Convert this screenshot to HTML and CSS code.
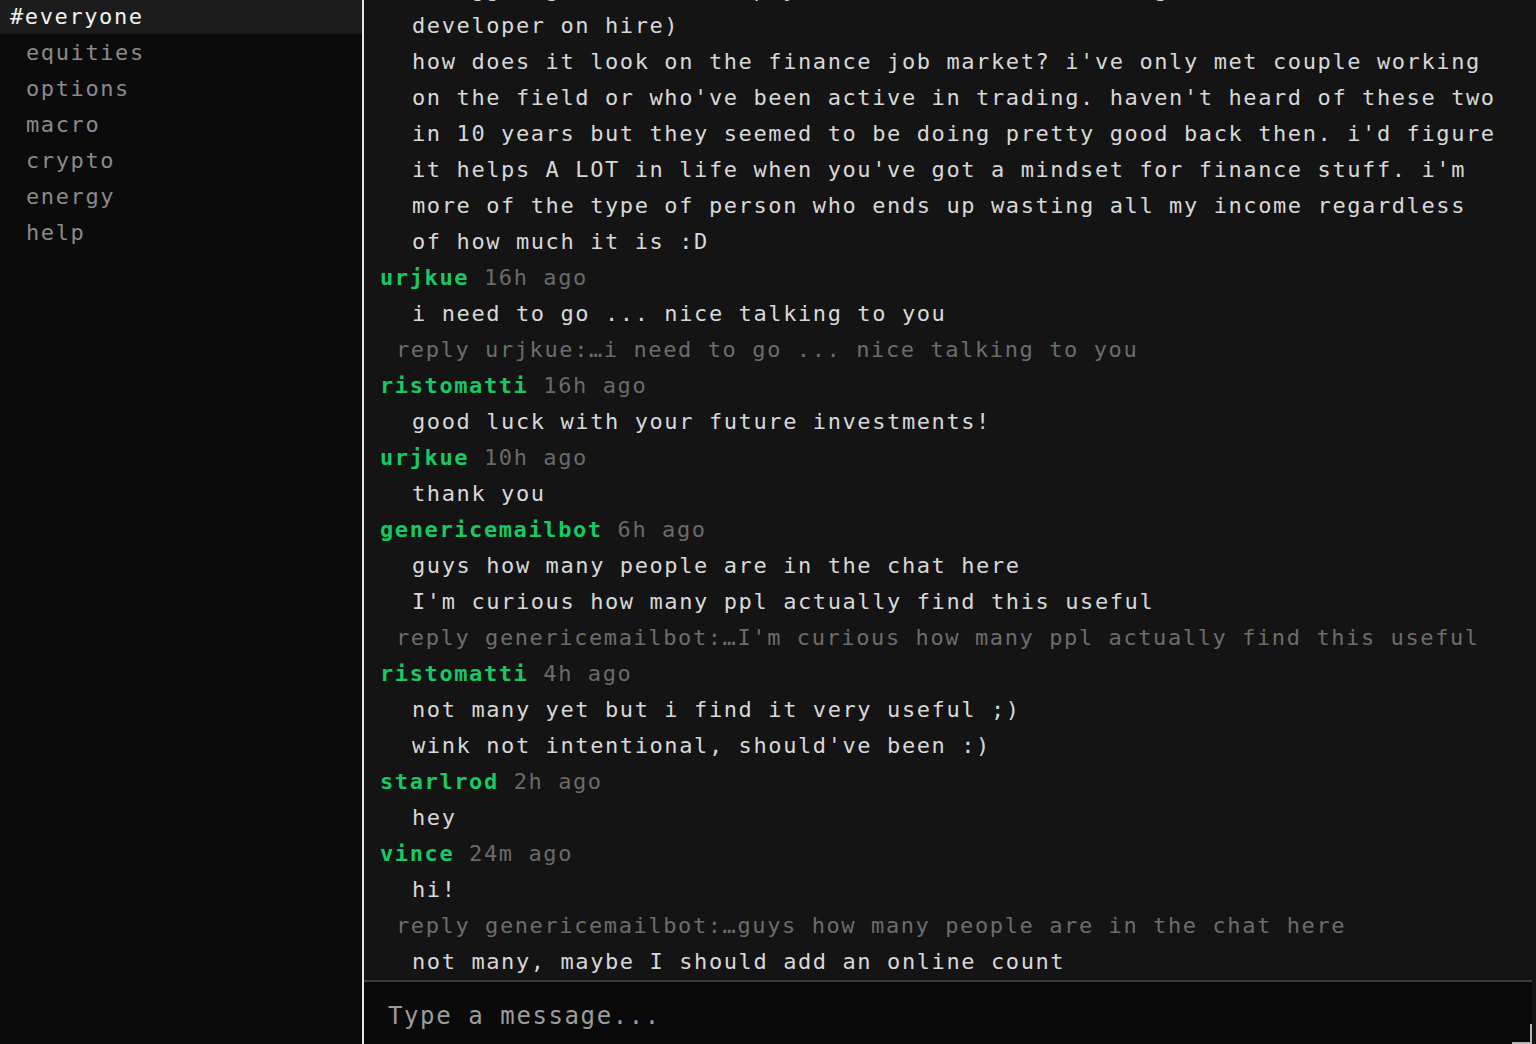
FILE: index.html
```html
<!DOCTYPE html>
<html lang="en">
<head>
<meta charset="utf-8">
<title>chat</title>
<link rel="stylesheet" href="styles.css">
</head>
<body>
<div class="app">
  <aside class="sidebar">
    <div class="channel active">#everyone</div>
    <div class="channel">equities</div>
    <div class="channel">options</div>
    <div class="channel">macro</div>
    <div class="channel">crypto</div>
    <div class="channel">energy</div>
    <div class="channel">help</div>
  </aside>
  <main class="main">
    <div class="messages">
      <div class="line text">struggling to make the pay work as a student or a good web freelance</div>
      <div class="line text">developer on hire)</div>
      <div class="line text">how does it look on the finance job market? i've only met couple working</div>
      <div class="line text">on the field or who've been active in trading. haven't heard of these two</div>
      <div class="line text">in 10 years but they seemed to be doing pretty good back then. i'd figure</div>
      <div class="line text">it helps A LOT in life when you've got a mindset for finance stuff. i'm</div>
      <div class="line text">more of the type of person who ends up wasting all my income regardless</div>
      <div class="line text">of how much it is :D</div>

      <div class="line head"><span class="user">urjkue</span> <span class="time">16h ago</span></div>
      <div class="line text">i need to go ... nice talking to you</div>
      <div class="line reply">reply urjkue:…i need to go ... nice talking to you</div>

      <div class="line head"><span class="user">ristomatti</span> <span class="time">16h ago</span></div>
      <div class="line text">good luck with your future investments!</div>

      <div class="line head"><span class="user">urjkue</span> <span class="time">10h ago</span></div>
      <div class="line text">thank you</div>

      <div class="line head"><span class="user">genericemailbot</span> <span class="time">6h ago</span></div>
      <div class="line text">guys how many people are in the chat here</div>
      <div class="line text">I'm curious how many ppl actually find this useful</div>
      <div class="line reply">reply genericemailbot:…I'm curious how many ppl actually find this useful</div>

      <div class="line head"><span class="user">ristomatti</span> <span class="time">4h ago</span></div>
      <div class="line text">not many yet but i find it very useful ;)</div>
      <div class="line text">wink not intentional, should've been :)</div>

      <div class="line head"><span class="user">starlrod</span> <span class="time">2h ago</span></div>
      <div class="line text">hey</div>

      <div class="line head"><span class="user">vince</span> <span class="time">24m ago</span></div>
      <div class="line text">hi!</div>
      <div class="line reply">reply genericemailbot:…guys how many people are in the chat here</div>
      <div class="line text">not many, maybe I should add an online count</div>
    </div>
    <div class="composer">
      <textarea class="input" placeholder="Type a message..."></textarea>
      <span class="grip"></span>
    </div>
  </main>
</div>
</body>
</html>
```

FILE: styles.css
```css
html, body {
  margin: 0;
  padding: 0;
  height: 100%;
  background: #141414;
  overflow: hidden;
}

body {
  font-family: "DejaVu Sans Mono", "Liberation Mono", monospace;
  font-size: 22px;
  letter-spacing: 1.6px;
}

.app {
  display: flex;
  height: 1044px;
}

.sidebar {
  width: 362px;
  flex: 0 0 362px;
  background: #0b0b0b;
  border-right: 2px solid #e4e4e4;
  display: flex;
  flex-direction: column;
}

.channel {
  height: 36px;
  line-height: 36px;
  padding-left: 26px;
  color: #8a8a8a;
  white-space: nowrap;
}

.channel.active {
  height: 34px;
  line-height: 34px;
  margin-bottom: 1px;
  padding-left: 10px;
  background: #1c1c1c;
  color: #f2f2f2;
}

.main {
  flex: 1;
  display: flex;
  flex-direction: column;
  min-width: 0;
  background: #141414;
}

.messages {
  flex: 1;
  min-height: 0;
  overflow: hidden;
  display: flex;
  flex-direction: column;
  justify-content: flex-end;
  padding-left: 16px;
}

.line {
  flex: 0 0 36px;
  height: 36px;
  line-height: 36px;
  white-space: pre;
}

.text {
  padding-left: 32px;
  color: #d8d8d8;
}

.reply {
  padding-left: 16px;
  color: #6c6c6c;
}

.user {
  color: #17c964;
  font-weight: bold;
}

.time {
  color: #6a6a6a;
}

.composer {
  position: relative;
  height: 64px;
  flex: 0 0 64px;
  padding-right: 4px;
}

.input {
  display: block;
  box-sizing: border-box;
  width: 100%;
  height: 64px;
  margin: 0;
  border: none;
  border-top: 2px solid #3a3a3a;
  background: #0a0a0a;
  color: #d8d8d8;
  font-family: inherit;
  font-size: 24px;
  letter-spacing: 1.6px;
  line-height: 36px;
  padding: 16px 24px 0 24px;
  resize: none;
  outline: none;
  overflow: hidden;
}

.input::placeholder {
  color: #9c9c9c;
  opacity: 1;
}

.grip {
  position: absolute;
  right: 4px;
  bottom: 0;
  width: 18px;
  height: 18px;
  border-right: 2px solid #b4b4b4;
  border-bottom: 2px solid #b4b4b4;
}
```
